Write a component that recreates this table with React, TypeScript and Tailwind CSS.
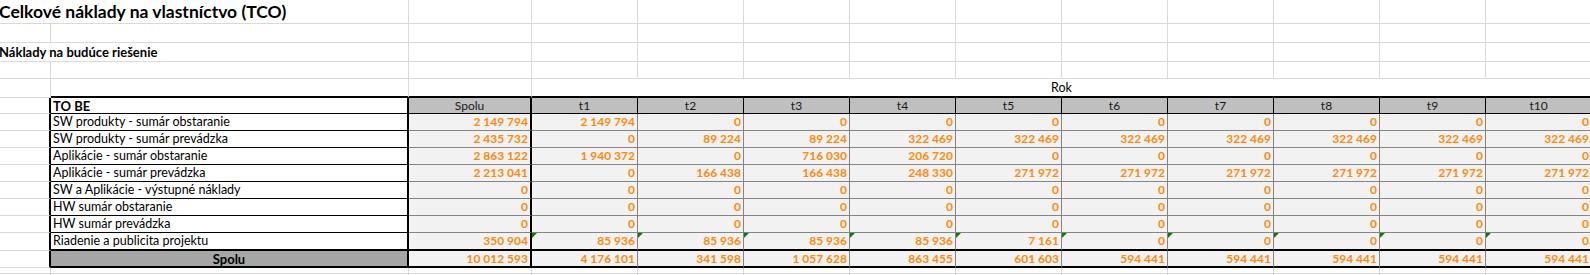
import React from "react";

const years = ["t1", "t2", "t3", "t4", "t5", "t6", "t7", "t8", "t9", "t10"];
const zeros = ["0", "0", "0", "0", "0", "0", "0", "0", "0", "0"];

const rows = [
  {
    label: "SW produkty - sumár obstaranie",
    total: "2 149 794",
    vals: ["2 149 794", "0", "0", "0", "0", "0", "0", "0", "0", "0"],
  },
  {
    label: "SW produkty - sumár prevádzka",
    total: "2 435 732",
    vals: ["0", "89 224", "89 224", "322 469", "322 469", "322 469", "322 469", "322 469", "322 469", "322 469"],
  },
  {
    label: "Aplikácie - sumár obstaranie",
    total: "2 863 122",
    vals: ["1 940 372", "0", "716 030", "206 720", "0", "0", "0", "0", "0", "0"],
  },
  {
    label: "Aplikácie - sumár prevádzka",
    total: "2 213 041",
    vals: ["0", "166 438", "166 438", "248 330", "271 972", "271 972", "271 972", "271 972", "271 972", "271 972"],
  },
  { label: "SW a Aplikácie - výstupné náklady", total: "0", vals: zeros },
  { label: "HW sumár obstaranie", total: "0", vals: zeros },
  { label: "HW sumár prevádzka", total: "0", vals: zeros },
];

const project = {
  label: "Riadenie a publicita projektu",
  total: "350 904",
  vals: ["85 936", "85 936", "85 936", "85 936", "7 161", "0", "0", "0", "0", "0"],
};

const sums = ["4 176 101", "341 598", "1 057 628", "863 455", "601 603", "594 441", "594 441", "594 441", "594 441", "594 441"];

// plain sheet cells with light gridlines
const Blank = ({ n, h }: { n: number; h: string }) => (
  <>
    {Array.from({ length: n }).map((_, i) => (
      <div key={i} className={`${h} border-r border-b border-[#d9d9d9]`} />
    ))}
  </>
);

const Num = ({ v, cls }: { v: string; cls: string }) => (
  <div className={`${cls} relative bg-[#f2f2f2] flex items-center justify-end pr-[2px] whitespace-nowrap font-bold text-[#ff8a0d]`}>
    {v}
  </div>
);

const Flag = () => (
  <span className="absolute top-0 left-0 w-0 h-0 border-t-[5px] border-r-[5px] border-t-[#0a7a0a] border-r-transparent" />
);

export default function App() {
  return (
    <div className="w-[1590px] h-[275px] overflow-hidden bg-white [font-family:Lato,sans-serif] text-[12px] leading-[16px] text-black">
      <div className="grid grid-cols-[51px_358px_123px_repeat(10,106px)] w-[1592px]">
        {/* title */}
        <div className="col-span-2 h-[24px] border-r border-b border-[#d9d9d9] flex items-end pb-[1px]">
          <span className="-ml-[1px] whitespace-nowrap text-[17.5px] leading-[21px] font-bold">
            Celkové náklady na vlastníctvo (TCO)
          </span>
        </div>
        <Blank n={11} h="h-[24px]" />

        <Blank n={13} h="h-[19px]" />

        <div className="col-span-2 h-[19px] border-r border-b border-[#d9d9d9] flex items-end pb-[1px]">
          <span className="-ml-[1px] whitespace-nowrap font-bold text-[13px]">Náklady na budúce riešenie</span>
        </div>
        <Blank n={11} h="h-[19px]" />

        <Blank n={13} h="h-[17px]" />

        {/* Rok */}
        <div className="h-[19px] border-r border-b border-[#d9d9d9]" />
        <div className="h-[19px] border-r border-r-[#d9d9d9] border-b-2 border-b-black" />
        <div className="h-[19px] border-r border-r-[#d9d9d9] border-b-2 border-b-black" />
        <div className="col-span-10 h-[19px] border-r border-r-[#d9d9d9] border-b-2 border-b-black flex items-center justify-center text-[12.5px]">
          Rok
        </div>

        {/* header */}
        <div className="h-[16px] border-r-2 border-r-black border-b border-b-[#d9d9d9]" />
        <div className="h-[16px] border-r-2 border-r-black border-b border-b-black pl-[2px] flex items-center font-bold text-[13px]">
          TO BE
        </div>
        <div className="h-[16px] bg-[#bfbfbf] border-r-2 border-r-black border-b border-b-black flex items-center justify-center text-[#1a1a1a]">
          Spolu
        </div>
        {years.map((y) => (
          <div key={y} className="h-[16px] bg-[#bfbfbf] border-r border-b border-black flex items-center justify-center text-[#1a1a1a]">
            {y}
          </div>
        ))}

        {/* data rows */}
        {rows.map((r) => (
          <React.Fragment key={r.label}>
            <div className="h-[17px] border-r-2 border-r-black border-b border-b-[#d9d9d9]" />
            <div className="h-[17px] border-r-2 border-r-black border-b border-b-black pl-[2px] flex items-center whitespace-nowrap text-[12.5px]">
              {r.label}
            </div>
            <Num v={r.total} cls="h-[17px] border-r-2 border-r-black border-b border-b-[#858585]" />
            {r.vals.map((v, i) => (
              <Num key={i} v={v} cls="h-[17px] border-r border-b border-[#858585]" />
            ))}
          </React.Fragment>
        ))}

        {/* project row */}
        <div className="h-[18px] border-r-2 border-r-black border-b border-b-[#d9d9d9]" />
        <div className="h-[18px] border-r-2 border-r-black border-b-2 border-b-black pl-[2px] flex items-center whitespace-nowrap text-[12.5px]">
          {project.label}
        </div>
        <Num v={project.total} cls="h-[18px] border-r-2 border-r-black border-b-2 border-b-black" />
        {project.vals.map((v, i) => (
          <div key={i} className="h-[18px] relative bg-[#f2f2f2] border-r border-r-[#858585] border-b-2 border-b-black flex items-center justify-end pr-[2px] whitespace-nowrap font-bold text-[#ff8a0d]">
            <Flag />
            {v}
          </div>
        ))}

        {/* total row */}
        <div className="h-[17px] border-r-2 border-r-black border-b border-b-[#d9d9d9]" />
        <div className="h-[17px] bg-[#a6a6a6] border-r-2 border-r-black border-b-2 border-b-black flex items-center justify-center font-bold text-[13px]">
          Spolu
        </div>
        <Num v="10 012 593" cls="h-[17px] border-r-2 border-r-black border-b-2 border-b-black" />
        {sums.map((v, i) => (
          <Num key={i} v={v} cls="h-[17px] border-r border-r-[#858585] border-b-2 border-b-black" />
        ))}

        <Blank n={13} h="h-[6px]" />
        <Blank n={13} h="h-[17px]" />
      </div>
    </div>
  );
}
